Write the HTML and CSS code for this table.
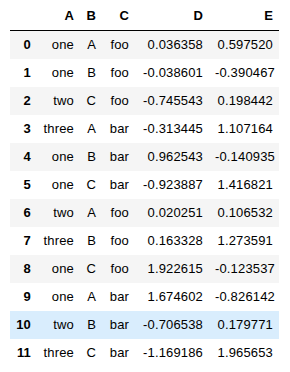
FILE: index.html
```html
<!DOCTYPE html>
<html>
<head>
<meta charset="utf-8">
<link rel="stylesheet" href="styles.css">
</head>
<body>
<table class="df">
  <colgroup>
    <col class="c-idx"><col class="c-a"><col class="c-b"><col class="c-c"><col class="c-d"><col class="c-e">
  </colgroup>
  <thead>
    <tr><th></th><th>A</th><th>B</th><th>C</th><th>D</th><th>E</th></tr>
  </thead>
  <tbody>
    <tr><th>0</th><td>one</td><td>A</td><td>foo</td><td>0.036358</td><td>0.597520</td></tr>
    <tr><th>1</th><td>one</td><td>B</td><td>foo</td><td>-0.038601</td><td>-0.390467</td></tr>
    <tr><th>2</th><td>two</td><td>C</td><td>foo</td><td>-0.745543</td><td>0.198442</td></tr>
    <tr><th>3</th><td>three</td><td>A</td><td>bar</td><td>-0.313445</td><td>1.107164</td></tr>
    <tr><th>4</th><td>one</td><td>B</td><td>bar</td><td>0.962543</td><td>-0.140935</td></tr>
    <tr><th>5</th><td>one</td><td>C</td><td>bar</td><td>-0.923887</td><td>1.416821</td></tr>
    <tr><th>6</th><td>two</td><td>A</td><td>foo</td><td>0.020251</td><td>0.106532</td></tr>
    <tr><th>7</th><td>three</td><td>B</td><td>foo</td><td>0.163328</td><td>1.273591</td></tr>
    <tr><th>8</th><td>one</td><td>C</td><td>foo</td><td>1.922615</td><td>-0.123537</td></tr>
    <tr><th>9</th><td>one</td><td>A</td><td>bar</td><td>1.674602</td><td>-0.826142</td></tr>
    <tr class="hover"><th>10</th><td>two</td><td>B</td><td>bar</td><td>-0.706538</td><td>0.179771</td></tr>
    <tr><th>11</th><td>three</td><td>C</td><td>bar</td><td>-1.169186</td><td>1.965653</td></tr>
  </tbody>
</table>
</body>
</html>
```
FILE: styles.css
```css
html, body {
  margin: 0;
  padding: 0;
  background: #fff;
}
body {
  padding: 2px 0 0 10px;
  font-family: "Liberation Sans", Arial, sans-serif;
  font-size: 13px;
  color: #000;
}
.df {
  border-collapse: collapse;
  border-spacing: 0;
  border: none;
  table-layout: fixed;
  width: 269px;
}
.c-idx { width: 27px; }
.c-a { width: 43px; }
.c-b { width: 22px; }
.c-c { width: 33px; }
.c-d { width: 74px; }
.c-e { width: 70px; }
.df th, .df td {
  padding: 6px;
  line-height: 16px;
  text-align: right;
  vertical-align: middle;
  white-space: nowrap;
  border: none;
  letter-spacing: 0.15px;
}
.df th {
  font-weight: bold;
}
.df thead th {
  border-bottom: 1px solid #000;
}
.df tbody tr:nth-child(odd) {
  background: #f5f5f5;
}
.df tbody tr.hover {
  background: #d9edfd;
}
```
